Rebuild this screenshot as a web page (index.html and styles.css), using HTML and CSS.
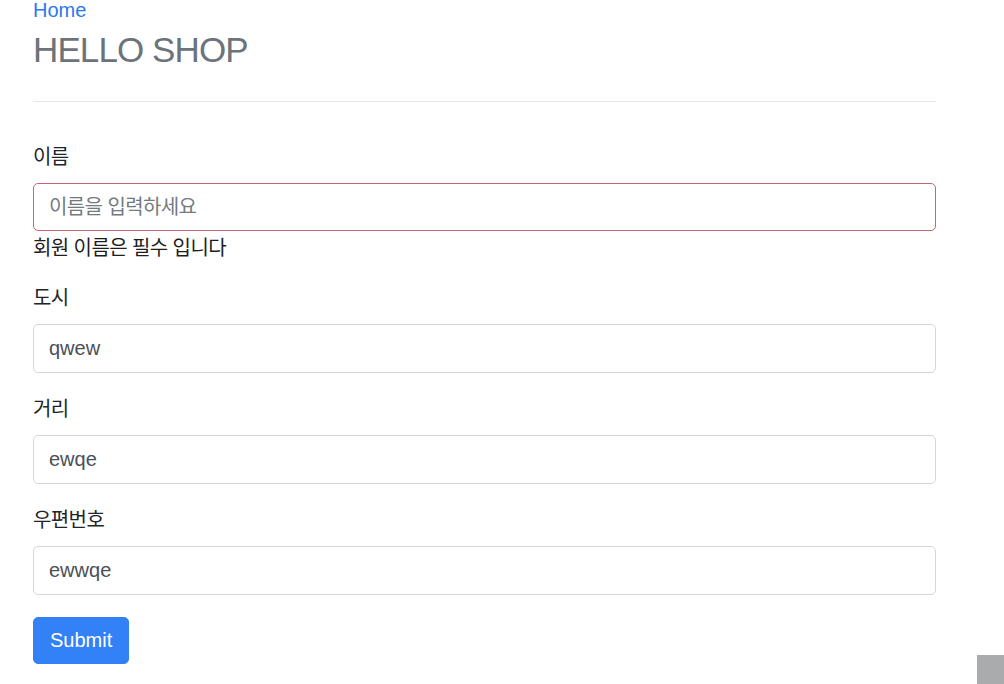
FILE: index.html
```html
<!DOCTYPE html>
<html lang="ko">
<head>
<meta charset="utf-8">
<title>HELLO SHOP</title>
<link rel="stylesheet" href="styles.css">
</head>
<body>
<div class="container">
  <div class="header">
    <a class="home" href="#">Home</a>
    <h3 class="title">HELLO SHOP</h3>
  </div>
  <form class="form">
    <div class="group">
      <label class="label" for="name">이름</label>
      <input class="input invalid" id="name" type="text" placeholder="이름을 입력하세요">
      <p class="error">회원 이름은 필수 입니다</p>
    </div>
    <div class="group">
      <label class="label" for="city">도시</label>
      <input class="input" id="city" type="text" value="qwew">
    </div>
    <div class="group">
      <label class="label" for="street">거리</label>
      <input class="input" id="street" type="text" value="ewqe">
    </div>
    <div class="group">
      <label class="label" for="zip">우편번호</label>
      <input class="input" id="zip" type="text" value="ewwqe">
    </div>
    <button class="submit" type="submit">Submit</button>
  </form>
</div>
<div class="corner"></div>
</body>
</html>
```
FILE: styles.css
```css
html, body {
  margin: 0;
  padding: 0;
  background: #fff;
}
body {
  font-family: "Liberation Sans", "Noto Sans CJK KR", sans-serif;
  font-size: 20px;
  line-height: 30px;
  color: #212529;
  overflow: hidden;
  height: 684px;
}
.container {
  width: 903px;
  margin-left: 33px;
}
.header {
  margin-top: -5px;
  padding-bottom: 28px;
  border-bottom: 1px solid #e6e8ea;
}
.home {
  display: block;
  color: #2b78ef;
  text-decoration: none;
  line-height: 30px;
}
.title {
  margin: 0;
  padding-top: 2px;
  font-size: 35px;
  letter-spacing: -0.9px;
  font-weight: 400;
  line-height: 46px;
  color: #6c737a;
}
.form {
  padding-top: 39px;
}
.group {
  display: flex;
  flex-direction: column;
  margin-bottom: 20px;
}
.label {
  display: block;
  margin-bottom: 12px;
  font-family: "Noto Sans CJK KR", sans-serif;
  font-size: 20px;
  letter-spacing: -0.6px;
  line-height: 30px;
}
.input {
  box-sizing: border-box;
  width: 100%;
  height: 49px;
  padding: 0 15px;
  border: 1px solid #d3d7db;
  border-radius: 5px;
  font-family: "Liberation Sans", "Noto Sans CJK KR", sans-serif;
  font-size: 20px;
  color: #495057;
  background: #fff;
  outline: none;
}
.input::placeholder {
  font-family: "Noto Sans CJK KR", sans-serif;
  font-size: 20px;
  letter-spacing: -0.6px;
  color: #737a80;
}
.input.invalid {
  border-color: #c66670;
  height: 48px;
}
.error {
  margin: 1px 0 0;
  font-family: "Noto Sans CJK KR", sans-serif;
  font-size: 20px;
  letter-spacing: -0.6px;
  line-height: 30px;
  color: #1d1d1f;
}
.submit {
  margin-top: 2px;
  height: 47px;
  padding: 0 16px;
  border: 1px solid #3381f6;
  border-radius: 5px;
  background: #3381f6;
  color: #fff;
  font-family: "Liberation Sans", sans-serif;
  font-size: 20px;
  cursor: pointer;
}
.corner {
  position: fixed;
  right: 0;
  bottom: 0;
  width: 27px;
  height: 29px;
  background: #a9abad;
}
```
